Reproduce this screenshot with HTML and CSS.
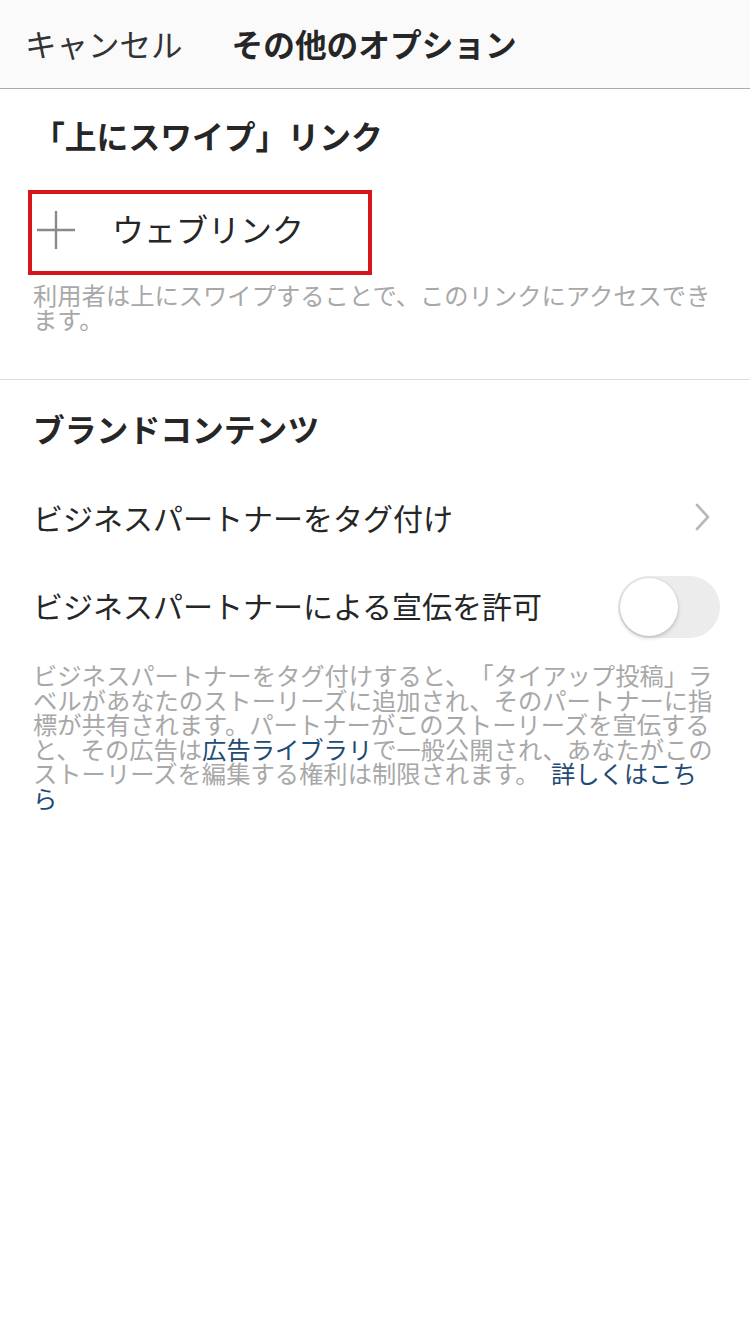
FILE: index.html
```html
<!DOCTYPE html>
<html lang="ja">
<head>
<meta charset="utf-8">
<link rel="stylesheet" href="styles.css">
</head>
<body>
<header class="nav">
  <span class="nav-cancel">キャンセル</span>
  <span class="nav-title">その他のオプション</span>
</header>

<section class="section section-swipe">
  <h2 class="section-title">「上にスワイプ」リンク</h2>
  <div class="link-box">
    <svg class="plus" width="40" height="40" viewBox="0 0 40 40">
      <path d="M20 1V39M1 20H39" stroke="#8a8a8a" stroke-width="2.4" fill="none"/>
    </svg>
    <span class="link-label">ウェブリンク</span>
  </div>
  <p class="note">利用者は上にスワイプすることで、このリンクにアクセスできます。</p>
</section>

<section class="section section-brand">
  <h2 class="section-title">ブランドコンテンツ</h2>
  <div class="row">
    <span class="row-label">ビジネスパートナーをタグ付け</span>
    <svg class="chevron" width="16" height="28" viewBox="0 0 16 28">
      <path d="M2 2L13 14L2 26" stroke="#b8b8b8" stroke-width="2.6" fill="none" stroke-linecap="round" stroke-linejoin="round"/>
    </svg>
  </div>
  <div class="row">
    <span class="row-label">ビジネスパートナーによる宣伝を許可</span>
    <span class="toggle"><span class="knob"></span></span>
  </div>
  <p class="note note-brand">ビジネスパートナーをタグ付けすると、「タイアップ投稿」ラベルがあなたのストーリーズに追加され、そのパートナーに指標が共有されます。パートナーがこのストーリーズを宣伝すると、その広告は<span class="link">広告ライブラリ</span>で一般公開され、あなたがこのストーリーズを編集する権利は制限されます。 <span class="link">詳しくはこちら</span></p>
</section>
</body>
</html>
```

FILE: styles.css
```css
* { box-sizing: border-box; }
html, body {
  margin: 0;
  padding: 0;
  background: #ffffff;
  font-family: "Noto Sans CJK JP", "Noto Sans", sans-serif;
  color: #262626;
  text-spacing-trim: space-all;
}
.nav {
  height: 89px;
  background: #fafafa;
  border-bottom: 1px solid #ababab;
  display: flex;
  align-items: center;
  padding: 0 0 0 25px;
}
.nav-cancel {
  font-size: 31.5px;
  color: #333;
  line-height: 1;
}
.nav-title {
  font-size: 31.7px;
  font-weight: 700;
  color: #262626;
  margin-left: 49px;
  line-height: 1;
}
.section {
  padding: 0 33px 0 33px;
}
.section-swipe {
  border-bottom: 1px solid #dbdbdb;
  padding-top: 30px;
  height: 291px;
}
.section-title {
  margin: 0;
  font-size: 31.8px;
  font-weight: 700;
  line-height: 32px;
  color: #262626;
}
.link-box {
  margin: 39px 0 0 -5px;
  width: 344px;
  height: 85px;
  border: 4px solid #d7161b;
  display: flex;
  align-items: center;
  padding-left: 4px;
}
.plus {
  display: block;
  margin-top: -6px;
}
.link-label {
  font-size: 32px;
  color: #262626;
  margin-left: 36px;
  margin-top: -10px;
  line-height: 1;
}
.note {
  margin: 8px 0 0;
  font-size: 24.3px;
  line-height: 24px;
  color: #a8a8a8;
}
.section-brand {
  padding-top: 32px;
}
.row {
  display: flex;
  align-items: center;
  justify-content: space-between;
  height: 88px;
}
.section-brand .section-title {
  margin-bottom: 29px;
}
.row-label {
  font-size: 30px;
  line-height: 1;
  color: #262626;
}
.chevron {
  display: block;
  margin-right: 6px;
}
.toggle {
  width: 102px;
  height: 62px;
  border-radius: 31px;
  background: #ececec;
  margin-right: -3px;
  margin-top: 4px;
  position: relative;
  display: block;
}
.knob {
  position: absolute;
  left: 2px;
  top: 2px;
  width: 58px;
  height: 58px;
  border-radius: 50%;
  background: #fff;
  box-shadow: 0 2px 4px rgba(0,0,0,0.18), 0 0 0 1px rgba(0,0,0,0.04);
}
.note-brand {
  margin-top: 14px;
  line-height: 24.6px;
  word-spacing: 6px;
}
.link {
  color: #1e4b73;
}
```
